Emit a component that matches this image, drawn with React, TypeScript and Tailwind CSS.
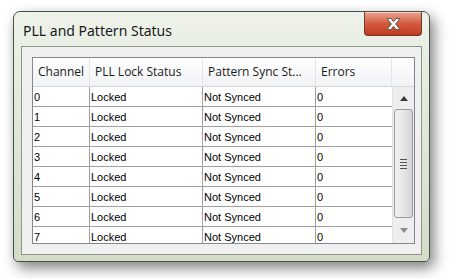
const rows = [0, 1, 2, 3, 4, 5, 6, 7];

const cols = [
  { label: "Channel", w: "w-[57px]" },
  { label: "PLL Lock Status", w: "w-[113px]" },
  { label: "Pattern Sync St...", w: "w-[113px]" },
  { label: "Errors", w: "w-[76px]" },
];

function CloseButton() {
  return (
    <div className="absolute right-[7px] top-0 flex h-[24px] w-[58px] items-center justify-center rounded-b-[4px] border border-t-0 border-[#6d3a30] bg-gradient-to-b from-[#e9a593] via-[#d45a3f] to-[#c2381f] shadow-[inset_0_1px_0_rgba(255,255,255,0.5)]">
      <svg width="17" height="14" viewBox="0 0 17 14">
        <path
          d="M2 1.5h4l2.5 3.2L11 1.5h4L10.6 7 15 12.5h-4L8.5 9.3 6 12.5H2L6.4 7Z"
          fill="#ffffff"
          stroke="#5a5a5a"
          strokeWidth="1"
          strokeLinejoin="round"
        />
      </svg>
    </div>
  );
}

function ScrollBar() {
  return (
    <div className="flex w-[23px] flex-col items-center border-l border-[#e2e2e2] bg-[#eeeeee]">
      <div className="flex h-[22px] w-full items-center justify-center">
        <svg width="8" height="5" viewBox="0 0 8 5">
          <path d="M0 5L4 0l4 5Z" fill="#3a3a3a" />
        </svg>
      </div>
      <div className="flex h-[109px] w-[19px] items-end justify-center rounded-[3px] border border-[#9c9c9c] bg-gradient-to-r from-[#f2f2f2] via-[#e6e6e6] to-[#d4d4d4] pb-[48px]">
        <div className="flex flex-col gap-[2px]">
          <div className="h-px w-[7px] bg-[#555]" />
          <div className="h-px w-[7px] bg-[#555]" />
          <div className="h-px w-[7px] bg-[#555]" />
          <div className="h-px w-[7px] bg-[#555]" />
        </div>
      </div>
      <div className="flex flex-1 w-full items-center justify-center">
        <svg width="8" height="5" viewBox="0 0 8 5">
          <path d="M0 0h8L4 5Z" fill="#8a8a8a" />
        </svg>
      </div>
    </div>
  );
}

export default function App() {
  return (
    <div className="h-[279px] w-[455px] overflow-hidden bg-white pl-[13px] pt-[11px]">
      <div className="relative flex h-[251px] w-[417px] flex-col rounded-t-[7px] rounded-b-[5px] border border-[#4a4f4a] bg-gradient-to-b from-[#eef2ea] via-[#dfe7d7] to-[#d2dcc8] shadow-[4px_6px_14px_rgba(0,0,0,0.5)]">
        <div className="flex h-[34px] items-center pl-[9px] pt-[2px]">
          <span className="text-[14px] text-[#1a1a1a]" style={{ fontFamily: '"Noto Sans", "Open Sans", sans-serif' }}>
            PLL and Pattern Status
          </span>
        </div>
        <CloseButton />
        <div className="mx-[7px] flex h-[209px] border border-[#8d9689] bg-[#f0f0f0] pl-[10px] pt-[10px]">
          <div className="flex h-[187px] w-[383px] flex-col border border-[#828790] bg-white">
            <div className="flex h-[29px] shrink-0 border-b border-[#d5d5d5] bg-gradient-to-b from-white to-[#f1f2f4]" style={{ fontFamily: '"Open Sans", "Noto Sans", sans-serif' }}>
              {cols.map((c) => (
                <div key={c.label} className={`${c.w} flex items-center border-r border-[#e3e5e8] pl-[5px] text-[12px] text-[#1a1a1a]`}>
                  {c.label}
                </div>
              ))}
              <div className="flex-1" />
            </div>
            <div className="flex flex-1 overflow-hidden">
              <div className="flex flex-col" style={{ fontFamily: '"Liberation Sans", Arial, sans-serif' }}>
                {rows.map((r) => (
                  <div key={r} className="flex h-[20px] shrink-0 border-b border-[#a0a0a0] text-[11px] text-black">
                    <div className="flex w-[57px] items-center border-r border-[#a0a0a0] pl-[1px] pt-[1px]">{r}</div>
                    <div className="flex w-[113px] items-center border-r border-[#a0a0a0] pl-[1px] pt-[1px]">Locked</div>
                    <div className="flex w-[113px] items-center border-r border-[#a0a0a0] pl-[1px] pt-[1px]">Not Synced</div>
                    <div className="flex w-[76px] items-center pl-[1px] pt-[1px]">0</div>
                  </div>
                ))}
              </div>
              <ScrollBar />
            </div>
          </div>
        </div>
      </div>
    </div>
  );
}
